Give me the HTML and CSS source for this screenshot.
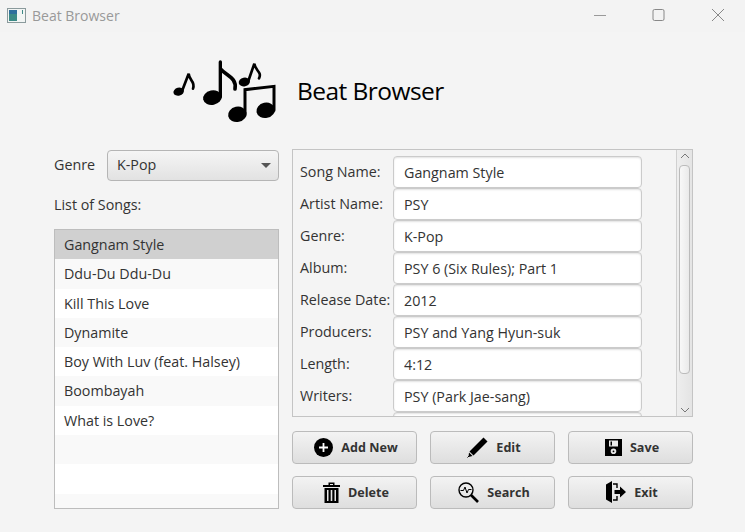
FILE: index.html
```html
<!DOCTYPE html>
<html lang="en">
<head>
    <meta charset="UTF-8">
    <meta name="viewport" content="width=device-width, initial-scale=1.0">
    <title>Beat Browser</title>
    <link rel="stylesheet" href="styles.css">
</head>
<body>
    <!-- Window title bar -->
    <header class="titlebar">
        <svg class="app-icon" width="19" height="15" viewBox="0 0 19 15">
            <rect x="0.5" y="0.5" width="18" height="14" fill="#f2f5f4" stroke="#8a9a9c"/>
            <rect x="2" y="2" width="8" height="11" fill="#3c8a86"/>
            <rect x="2" y="2" width="8" height="4" fill="#2f6f9c"/>
            <rect x="15" y="2" width="1" height="4" fill="#3c8a86"/>
        </svg>
        <span class="window-title">Beat Browser</span>
        <div class="window-controls">
            <svg width="14" height="14" viewBox="0 0 14 14"><path d="M1 7.5H13" stroke="#999" fill="none"/></svg>
            <svg width="14" height="14" viewBox="0 0 14 14"><rect x="1" y="1.5" width="11" height="11" rx="1.5" stroke="#888" fill="none"/></svg>
            <svg width="14" height="14" viewBox="0 0 14 14"><path d="M1 1L13 13M13 1L1 13" stroke="#888" fill="none"/></svg>
        </div>
    </header>

    <!-- Logo and name -->
    <section class="banner">
        <svg class="logo" width="120" height="80" viewBox="0 0 360 240">
            <g fill="#000">
                <ellipse cx="41" cy="122" rx="16" ry="12" transform="rotate(-15 41 122)"/>
                <ellipse cx="142" cy="140" rx="28" ry="22" transform="rotate(-12 142 140)"/>
                <ellipse cx="238" cy="93" rx="17" ry="13" transform="rotate(-12 238 93)"/>
                <ellipse cx="217" cy="190" rx="28" ry="23" transform="rotate(-12 217 190)"/>
                <ellipse cx="302" cy="178" rx="28" ry="23" transform="rotate(-12 302 178)"/>
            </g>
            <g fill="none" stroke="#000" stroke-linecap="round">
                <path d="M52 118L71 68C72 90 92 90 84 113" stroke-width="8"/>
                <path d="M166 138V33" stroke-width="10"/>
                <path d="M168 55C185 75 216 80 210 114" stroke-width="11"/>
                <path d="M250 90L268 38C270 60 292 62 282 82" stroke-width="8"/>
                <path d="M240 190V116L327 106V178" stroke-width="9"/>
            </g>
        </svg>
        <h1>Beat Browser</h1>
    </section>

    <main class="content">
        <!-- Song list -->
        <div class="left-col">
            <div class="genre-row">
                <label class="genre-label">Genre</label>
                <div class="combo">
                    <span>K-Pop</span>
                    <span class="combo-arrow"></span>
                </div>
            </div>
            <p class="list-title">List of Songs:</p>
            <ul class="song-list">
                <li class="selected">Gangnam Style</li>
                <li>Ddu-Du Ddu-Du</li>
                <li>Kill This Love</li>
                <li>Dynamite</li>
                <li>Boy With Luv (feat. Halsey)</li>
                <li>Boombayah</li>
                <li>What is Love?</li>
                <li></li>
                <li></li>
                <li></li>
            </ul>
        </div>

        <!-- Song details and actions -->
        <div class="right-col">
            <div class="details">
                <div class="fields">
                    <div class="field"><label>Song Name:</label><input type="text" value="Gangnam Style"></div>
                    <div class="field"><label>Artist Name:</label><input type="text" value="PSY"></div>
                    <div class="field"><label>Genre:</label><input type="text" value="K-Pop"></div>
                    <div class="field"><label>Album:</label><input type="text" value="PSY 6 (Six Rules); Part 1"></div>
                    <div class="field"><label>Release Date:</label><input type="text" value="2012"></div>
                    <div class="field"><label>Producers:</label><input type="text" value="PSY and Yang Hyun-suk"></div>
                    <div class="field"><label>Length:</label><input type="text" value="4:12"></div>
                    <div class="field"><label>Writers:</label><input type="text" value="PSY (Park Jae-sang)"></div>
                    <div class="field"><label></label><input type="text"></div>
                </div>
                <div class="scrollbar">
                    <svg width="10" height="6" viewBox="0 0 10 6"><path d="M1 5L5 1L9 5" stroke="#777" fill="none"/></svg>
                    <div class="thumb"></div>
                    <svg class="scroll-down" width="10" height="6" viewBox="0 0 10 6"><path d="M1 1L5 5L9 1" stroke="#777" fill="none"/></svg>
                </div>
            </div>
            <div class="actions">
                <button>
                    <svg width="19" height="19" viewBox="0 0 19 19"><circle cx="9.5" cy="9.5" r="9.5"/><path d="M9.5 5V14M5 9.5H14" stroke="#fff" stroke-width="1.8"/></svg>
                    Add New
                </button>
                <button>
                    <svg width="21" height="21" viewBox="0 0 21 21"><path d="M16.5 0.5L20.5 4.5L6.5 18.5L2.5 14.5Z"/><path d="M2 15.5L5.5 19L1.5 20Z"/><path d="M0.5 20.5L2 19" stroke="#000"/></svg>
                    Edit
                </button>
                <button>
                    <svg width="17" height="17" viewBox="0 0 17 17"><path fill-rule="evenodd" d="M0 0H17V17H0ZM4 1.5V7.5H13V1.5ZM5.5 2.5H7V6.5H5.5ZM8.5 9.5A2.8 2.8 0 1 0 8.5 15.1A2.8 2.8 0 1 0 8.5 9.5ZM8.5 11.4A.9 .9 0 1 1 8.5 13.2A.9 .9 0 1 1 8.5 11.4Z"/></svg>
                    Save
                </button>
                <button>
                    <svg width="17" height="21" viewBox="0 0 17 21"><path d="M0 3H17V5H0ZM5.5 0.5H11.5V3H10V2H7V3H5.5Z"/><path fill-rule="evenodd" d="M1.5 6H15.5V21H1.5ZM4 8V19H5.5V8ZM7.7 8V19H9.3V8ZM11.5 8V19H13V8Z"/></svg>
                    Delete
                </button>
                <button>
                    <svg width="21" height="21" viewBox="0 0 21 21"><circle cx="8" cy="8" r="7" fill="none" stroke="#000" stroke-width="1.4"/><path d="M2.5 8.5H5.5L7 5L9 11L10.5 7.5H13.5" fill="none" stroke="#000"/><path d="M13 13L20 20" stroke="#000" stroke-width="2.6"/></svg>
                    Search
                </button>
                <button>
                    <svg width="20" height="22" viewBox="0 0 20 22"><path d="M0 3.5L6 0V22L0 18.5Z"/><path d="M7 3H11V7M11 15V19H7" fill="none" stroke="#000" stroke-width="1.4"/><path d="M8.5 9H14V5.5L20 11L14 16.5V13H8.5Z"/></svg>
                    Exit
                </button>
            </div>
        </div>
    </main>
</body>
</html>
```
FILE: styles.css
```css
html, body {
    margin: 0;
    padding: 0;
}
body {
    width: 745px;
    height: 532px;
    overflow: hidden;
    background-color: #f4f4f4;
    color: #333;
    font-family: "Open Sans", "Liberation Sans", sans-serif;
    font-size: 14.3px;
}
.titlebar {
    display: flex;
    align-items: center;
    height: 32px;
    padding: 0 0 2px 7px;
    box-sizing: border-box;
    background-color: #f3f3f3;
}
.app-icon {
    margin-right: 6px;
}
.window-title {
    color: #999;
    font-size: 14px;
}
.window-controls {
    display: flex;
    gap: 45px;
    margin-left: auto;
    margin-right: 20px;
}
.banner {
    display: flex;
    align-items: center;
    height: 117px;
    padding-left: 165px;
    box-sizing: border-box;
}
.logo {
    filter: blur(0.3px);
}
.banner h1 {
    margin: 0 0 0 12px;
    color: #000;
    font-size: 24.5px;
    font-weight: 400;
    letter-spacing: -0.55px;
}
.content {
    display: flex;
    gap: 13px;
    padding-left: 54px;
}
.left-col {
    width: 225px;
}
.genre-row {
    display: flex;
    align-items: center;
    height: 31px;
    margin-top: 1px;
}
.genre-label {
    width: 53px;
    padding-bottom: 2px;
}
.combo {
    flex: 1;
    display: flex;
    align-items: center;
    justify-content: space-between;
    height: 31px;
    padding: 0 7px 2px 9px;
    box-sizing: border-box;
    border: 1px solid #b5b5b5;
    border-radius: 4px;
    background: linear-gradient(#f5f5f5, #e2e2e2);
}
.combo-arrow {
    width: 0;
    height: 0;
    margin-top: 2px;
    border-left: 5px solid transparent;
    border-right: 5px solid transparent;
    border-top: 5px solid #555;
}
.list-title {
    margin: 0;
    height: 48px;
    line-height: 48px;
}
.song-list {
    list-style: none;
    margin: 0;
    padding: 0;
    height: 280px;
    overflow: hidden;
    box-sizing: border-box;
    border: 1px solid #bdbdbd;
    background: #fff;
}
.song-list li {
    height: 29.3px;
    line-height: 29px;
    padding-left: 9px;
    background: #fff;
}
.song-list li:nth-child(even) {
    background: #f9f9f9;
}
.song-list li.selected {
    background: #d0d0d0;
}
.right-col {
    width: 401px;
}
.details {
    display: flex;
    height: 268px;
    box-sizing: border-box;
    border: 1px solid #c4c4c4;
    overflow: hidden;
}
.fields {
    flex: 1;
    padding: 6px 0 0 7px;
}
.field {
    display: flex;
    align-items: center;
    height: 32px;
}
.field label {
    width: 93px;
    padding-bottom: 2px;
}
.field input {
    width: 249px;
    height: 32px;
    box-sizing: border-box;
    padding: 0 10px;
    border: 1px solid #cbcbcb;
    border-radius: 4px;
    box-shadow: inset 0 1px 2px #e2e2e2;
    background: #fff;
    color: #333;
    font-family: inherit;
    font-size: 14.3px;
    outline: none;
}
.scrollbar {
    display: flex;
    flex-direction: column;
    align-items: center;
    width: 16px;
    padding: 3px 0;
    box-sizing: border-box;
    border-left: 1px solid #d0d0d0;
    background: linear-gradient(90deg, #eeeeee, #e4e4e4);
}
.thumb {
    flex: none;
    width: 11px;
    height: 209px;
    margin-top: 6px;
    box-sizing: border-box;
    border: 1px solid #bbb;
    border-radius: 4px;
    background: linear-gradient(90deg, #f8f8f8, #eaeaea);
}
.scroll-down {
    margin-top: auto;
}
.actions {
    display: grid;
    grid-template-columns: repeat(3, 125px);
    grid-auto-rows: 33px;
    gap: 12px 13px;
    margin-top: 14px;
}
.actions button {
    display: flex;
    align-items: center;
    justify-content: center;
    gap: 8px;
    padding: 0 0 1px 3px;
    border: 1px solid #bbb;
    border-radius: 4px;
    background: linear-gradient(#f3f3f3, #dedede);
    color: #333;
    font-family: inherit;
    font-size: 12.6px;
    font-weight: 700;
}
```
